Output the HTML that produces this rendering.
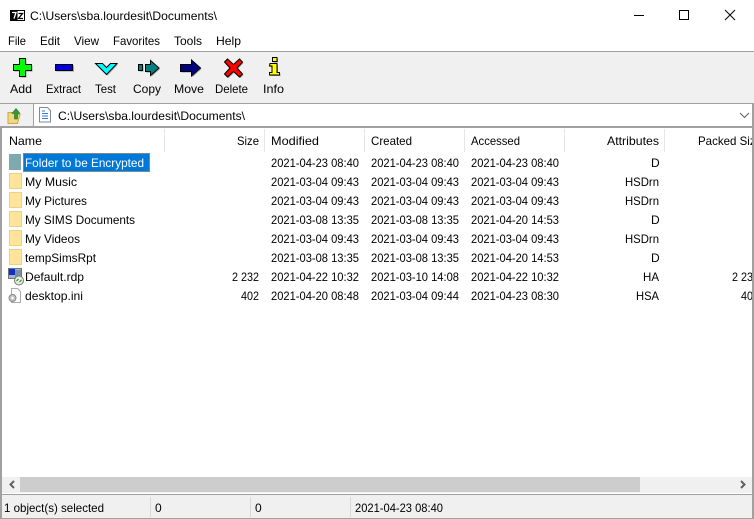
<!DOCTYPE html>
<html>
<head>
<meta charset="utf-8">
<style>
html,body{margin:0;padding:0;background:#fff;width:754px;height:519px;overflow:hidden}
svg{display:block}
text{font-family:"Liberation Sans",sans-serif;font-size:12px;fill:#000}
.w{fill:#fff}
</style>
</head>
<body>
<svg width="754" height="519" viewBox="0 0 754 519" xmlns="http://www.w3.org/2000/svg">
<rect width="754" height="519" fill="#fff"/>
<!-- title -->
<rect x="10" y="10" width="15" height="11" fill="#000"/>
<rect x="11" y="11" width="13" height="9" fill="#fff"/>
<rect x="11" y="11" width="6.500" height="9" fill="#000"/>
<path d="M12 12.500h4l-2 6" fill="none" stroke="#fff" stroke-width="1.300"/>
<path d="M18.500 13.500h4l-4 5h4.500" fill="none" stroke="#000" stroke-width="1.300"/>
<text x="30" y="20" textLength="187" lengthAdjust="spacingAndGlyphs">C:\Users\sba.lourdesit\Documents\</text>
<path d="M634 15.500h10" stroke="#000" stroke-width="1"/>
<rect x="679.500" y="10.500" width="9" height="9" fill="none" stroke="#000"/>
<path d="M725 10l10 10M735 10l-10 10" stroke="#000" stroke-width="1"/>
<!-- menu -->
<text x="8" y="45" textLength="18" lengthAdjust="spacingAndGlyphs">File</text>
<text x="40" y="45" textLength="20" lengthAdjust="spacingAndGlyphs">Edit</text>
<text x="74" y="45" textLength="25" lengthAdjust="spacingAndGlyphs">View</text>
<text x="113" y="45" textLength="47" lengthAdjust="spacingAndGlyphs">Favorites</text>
<text x="174" y="45" textLength="28" lengthAdjust="spacingAndGlyphs">Tools</text>
<text x="216" y="45" textLength="25" lengthAdjust="spacingAndGlyphs">Help</text>
<!-- toolbar -->
<rect x="0" y="51" width="754" height="53" fill="#f0f0f0"/>
<rect x="0" y="51" width="754" height="1" fill="#a0a0a0"/>
<rect x="0" y="103" width="754" height="1" fill="#a0a0a0"/>
<!-- icon shadows -->
<g fill="#9a9a9a">
<path d="M20.500 59.500h6v6h6v6h-6v6h-6v-6h-6v-6h6z"/>
<rect x="56.500" y="65.500" width="17.500" height="6"/>
<path d="M96.500 64.500h7l4 4 4-4h6.500l-10.500 11z"/>
<rect x="139.500" y="65.500" width="4" height="6"/>
<path d="M146.500 65.500h5v-4l8.500 7.500-8.500 7.500v-4h-5z"/>
<path d="M181.500 65.500h11v-4.500l9 8-9 8v-4.500h-11z"/>
<path d="M225.500 63l3-3 6 5.500 6-5.500 3 3-5.500 6 5.500 6-3 3-6-5.500-6 5.500-3-3 5.500-6z"/>
<rect x="273.500" y="58.500" width="4.500" height="4"/>
<path d="M271 64.500h7v9h2.500v2.500h-10v-2.500h2.500v-6.500h-2.500z"/>
</g>
<!-- Add -->
<path d="M19.500 58.500h6v6h6v6h-6v6h-6v-6h-6v-6h6z" fill="#00ff00" stroke="#000"/>
<!-- Extract -->
<rect x="55.500" y="64.500" width="17" height="6" fill="#0000e0" stroke="#000"/>
<!-- Test -->
<path d="M95.500 63.500h7l4 4 4-4h6.500l-10.500 11z" fill="#00ffff" stroke="#000"/>
<!-- Copy -->
<rect x="138.500" y="64.500" width="4" height="6" fill="#008080" stroke="#000"/>
<path d="M145.500 64.500h5v-4l8.500 7.500-8.500 7.500v-4h-5z" fill="#008080" stroke="#000"/>
<!-- Move -->
<path d="M180.500 64.500h11v-4.500l9 8-9 8v-4.500h-11z" fill="#000080" stroke="#000"/>
<!-- Delete -->
<path d="M224.500 62l3-3 6 5.500 6-5.500 3 3-5.500 6 5.500 6-3 3-6-5.500-6 5.500-3-3 5.500-6z" fill="#ff0000" stroke="#000"/>
<!-- Info -->
<rect x="272.500" y="57.500" width="4.500" height="4" fill="#ffff00" stroke="#000"/>
<path d="M270 63.500h7v9h2.500v2.500h-10v-2.500h2.500v-6.500h-2.500z" fill="#ffff00" stroke="#000"/>
<text x="10" y="93" textLength="22" lengthAdjust="spacingAndGlyphs">Add</text>
<text x="46" y="93" textLength="35" lengthAdjust="spacingAndGlyphs">Extract</text>
<text x="95" y="93" textLength="21" lengthAdjust="spacingAndGlyphs">Test</text>
<text x="133" y="93" textLength="28" lengthAdjust="spacingAndGlyphs">Copy</text>
<text x="174" y="93" textLength="30" lengthAdjust="spacingAndGlyphs">Move</text>
<text x="215" y="93" textLength="33" lengthAdjust="spacingAndGlyphs">Delete</text>
<text x="263" y="93" textLength="21" lengthAdjust="spacingAndGlyphs">Info</text>
<!-- address row -->
<rect x="0" y="104" width="34" height="23" fill="#f0f0f0"/>
<rect x="33" y="104" width="1" height="23" fill="#a0a0a0"/>
<rect x="0" y="126" width="754" height="2" fill="#a0a0a0"/>
<path d="M8 112.500h6l2 2h4l-2.500 9h-9.500z" fill="#f5d67a" stroke="#c8a850" stroke-width="1"/>
<path d="M14.500 119v-5.500h-2.500l4-5 4 5h-2.500v5.500z" fill="#2e9e2e" stroke="#2a7030" stroke-width=".6"/>
<path d="M39.500 107.500h8l3 3v11.500h-11z" fill="#fff" stroke="#7f8a96"/>
<path d="M42 111h3M42 113.500h6M42 116h6M42 118.500h6" stroke="#2a7fd0" stroke-width="1"/>
<text x="58" y="120" textLength="187" lengthAdjust="spacingAndGlyphs">C:\Users\sba.lourdesit\Documents\</text>
<path d="M740 113l4.500 4.500 4.500-4.500" fill="none" stroke="#606060"/>
<!-- list frame -->
<rect x="0" y="128" width="2" height="391" fill="#a0a0a0"/>
<!-- header -->
<g fill="#e5e5e5">
<rect x="164" y="129" width="1" height="23"/><rect x="264" y="129" width="1" height="23"/>
<rect x="364" y="129" width="1" height="23"/><rect x="464" y="129" width="1" height="23"/>
<rect x="564" y="129" width="1" height="23"/><rect x="664" y="129" width="1" height="23"/>
</g>
<text x="9" y="145" textLength="33" lengthAdjust="spacingAndGlyphs">Name</text>
<text x="237" y="145" textLength="22" lengthAdjust="spacingAndGlyphs">Size</text>
<text x="271" y="145" textLength="48" lengthAdjust="spacingAndGlyphs">Modified</text>
<text x="371" y="145" textLength="41" lengthAdjust="spacingAndGlyphs">Created</text>
<text x="471" y="145" textLength="49" lengthAdjust="spacingAndGlyphs">Accessed</text>
<text x="607" y="145" textLength="52" lengthAdjust="spacingAndGlyphs">Attributes</text>
<text x="698" y="145" textLength="64" lengthAdjust="spacingAndGlyphs">Packed Size</text>
<!-- selected row -->
<rect x="23" y="153" width="127" height="19" fill="#0078d7"/>
<rect x="23.500" y="153.500" width="126" height="18" fill="none" stroke="#f0a040" stroke-dasharray="1 1"/>
<!-- folder icons -->
<rect x="9" y="154" width="12" height="16" fill="#7fa9ae"/>
<g fill="#ffe49a" stroke="#ecd083">
<rect x="9.500" y="173.500" width="12" height="15"/>
<rect x="9.500" y="192.500" width="12" height="15"/>
<rect x="9.500" y="211.500" width="12" height="15"/>
<rect x="9.500" y="230.500" width="12" height="15"/>
<rect x="9.500" y="249.500" width="12" height="15"/>
</g>
<!-- rdp icon -->
<rect x="8.500" y="268.500" width="13" height="10" fill="#a9b4c0" stroke="#6a7480"/>
<rect x="9" y="269" width="6" height="6" fill="#1030c0"/>
<path d="M15 270h6v7h-6z" fill="#7d8fa5"/>
<circle cx="19" cy="280.500" r="4.500" fill="#e4ecdc" stroke="#777"/>
<path d="M16.500 281l2-2M21.500 280l-2 2" stroke="#1a8a1a"/>
<!-- ini icon -->
<path d="M11.500 288.500h6l3 3v11h-9z" fill="#fff" stroke="#aaa"/>
<circle cx="12.500" cy="298" r="3.500" fill="#c4c4c4" stroke="#8a8a8a"/>
<circle cx="12.500" cy="298" r="1.200" fill="#fff"/>
<!-- names -->
<text class="w" x="25" y="167" textLength="119" lengthAdjust="spacingAndGlyphs">Folder to be Encrypted</text>
<text x="25" y="186" textLength="52" lengthAdjust="spacingAndGlyphs">My Music</text>
<text x="25" y="205" textLength="62" lengthAdjust="spacingAndGlyphs">My Pictures</text>
<text x="25" y="224" textLength="110" lengthAdjust="spacingAndGlyphs">My SIMS Documents</text>
<text x="25" y="243" textLength="55" lengthAdjust="spacingAndGlyphs">My Videos</text>
<text x="25" y="262" textLength="71" lengthAdjust="spacingAndGlyphs">tempSimsRpt</text>
<text x="25" y="281" textLength="59" lengthAdjust="spacingAndGlyphs">Default.rdp</text>
<text x="25" y="300" textLength="58" lengthAdjust="spacingAndGlyphs">desktop.ini</text>
<!-- size -->
<text x="232" y="281" textLength="27" lengthAdjust="spacingAndGlyphs">2 232</text>
<text x="241" y="300" textLength="18" lengthAdjust="spacingAndGlyphs">402</text>
<!-- modified -->
<text x="271" y="167" textLength="88" lengthAdjust="spacingAndGlyphs">2021-04-23 08:40</text>
<text x="271" y="186" textLength="88" lengthAdjust="spacingAndGlyphs">2021-03-04 09:43</text>
<text x="271" y="205" textLength="88" lengthAdjust="spacingAndGlyphs">2021-03-04 09:43</text>
<text x="271" y="224" textLength="88" lengthAdjust="spacingAndGlyphs">2021-03-08 13:35</text>
<text x="271" y="243" textLength="88" lengthAdjust="spacingAndGlyphs">2021-03-04 09:43</text>
<text x="271" y="262" textLength="88" lengthAdjust="spacingAndGlyphs">2021-03-08 13:35</text>
<text x="271" y="281" textLength="88" lengthAdjust="spacingAndGlyphs">2021-04-22 10:32</text>
<text x="271" y="300" textLength="88" lengthAdjust="spacingAndGlyphs">2021-04-20 08:48</text>
<!-- created -->
<text x="371" y="167" textLength="88" lengthAdjust="spacingAndGlyphs">2021-04-23 08:40</text>
<text x="371" y="186" textLength="88" lengthAdjust="spacingAndGlyphs">2021-03-04 09:43</text>
<text x="371" y="205" textLength="88" lengthAdjust="spacingAndGlyphs">2021-03-04 09:43</text>
<text x="371" y="224" textLength="88" lengthAdjust="spacingAndGlyphs">2021-03-08 13:35</text>
<text x="371" y="243" textLength="88" lengthAdjust="spacingAndGlyphs">2021-03-04 09:43</text>
<text x="371" y="262" textLength="88" lengthAdjust="spacingAndGlyphs">2021-03-08 13:35</text>
<text x="371" y="281" textLength="88" lengthAdjust="spacingAndGlyphs">2021-03-10 14:08</text>
<text x="371" y="300" textLength="88" lengthAdjust="spacingAndGlyphs">2021-03-04 09:44</text>
<!-- accessed -->
<text x="471" y="167" textLength="88" lengthAdjust="spacingAndGlyphs">2021-04-23 08:40</text>
<text x="471" y="186" textLength="88" lengthAdjust="spacingAndGlyphs">2021-03-04 09:43</text>
<text x="471" y="205" textLength="88" lengthAdjust="spacingAndGlyphs">2021-03-04 09:43</text>
<text x="471" y="224" textLength="88" lengthAdjust="spacingAndGlyphs">2021-04-20 14:53</text>
<text x="471" y="243" textLength="88" lengthAdjust="spacingAndGlyphs">2021-03-04 09:43</text>
<text x="471" y="262" textLength="88" lengthAdjust="spacingAndGlyphs">2021-04-20 14:53</text>
<text x="471" y="281" textLength="88" lengthAdjust="spacingAndGlyphs">2021-04-22 10:32</text>
<text x="471" y="300" textLength="88" lengthAdjust="spacingAndGlyphs">2021-04-23 08:30</text>
<!-- attributes -->
<text x="651" y="167">D</text>
<text x="625" y="186" textLength="34" lengthAdjust="spacingAndGlyphs">HSDrn</text>
<text x="625" y="205" textLength="34" lengthAdjust="spacingAndGlyphs">HSDrn</text>
<text x="651" y="224">D</text>
<text x="625" y="243" textLength="34" lengthAdjust="spacingAndGlyphs">HSDrn</text>
<text x="651" y="262">D</text>
<text x="643" y="281" textLength="16" lengthAdjust="spacingAndGlyphs">HA</text>
<text x="636" y="300" textLength="23" lengthAdjust="spacingAndGlyphs">HSA</text>
<!-- packed -->
<text x="732" y="281" textLength="27" lengthAdjust="spacingAndGlyphs">2 232</text>
<text x="741" y="300" textLength="18" lengthAdjust="spacingAndGlyphs">402</text>
<!-- right edge on top of clipped text -->
<rect x="752" y="104" width="2" height="415" fill="#a0a0a0"/>
<!-- scrollbar -->
<rect x="2" y="477" width="750" height="16" fill="#f0f0f0"/>
<rect x="20" y="477" width="620" height="15" fill="#cdcdcd"/>
<path d="M14 481l-3.500 3.500 3.500 3.500" fill="none" stroke="#606060" stroke-width="2"/>
<path d="M741 481l3.500 3.500-3.500 3.500" fill="none" stroke="#606060" stroke-width="2"/>
<!-- status -->
<rect x="0" y="494" width="754" height="25" fill="#f0f0f0"/>
<rect x="0" y="494" width="754" height="1" fill="#a0a0a0"/>
<rect x="0" y="518" width="754" height="1" fill="#a0a0a0"/>
<rect x="0" y="494" width="2" height="25" fill="#a0a0a0"/>
<rect x="752" y="494" width="2" height="25" fill="#a0a0a0"/>
<rect x="150" y="497" width="1" height="20" fill="#d8d8d8"/>
<rect x="250" y="497" width="1" height="20" fill="#d8d8d8"/>
<rect x="350" y="497" width="1" height="20" fill="#d8d8d8"/>
<text x="4" y="512" textLength="100" lengthAdjust="spacingAndGlyphs">1 object(s) selected</text>
<text x="155" y="512">0</text>
<text x="255" y="512">0</text>
<text x="355" y="512" textLength="88" lengthAdjust="spacingAndGlyphs">2021-04-23 08:40</text>
</svg>
</body>
</html>
